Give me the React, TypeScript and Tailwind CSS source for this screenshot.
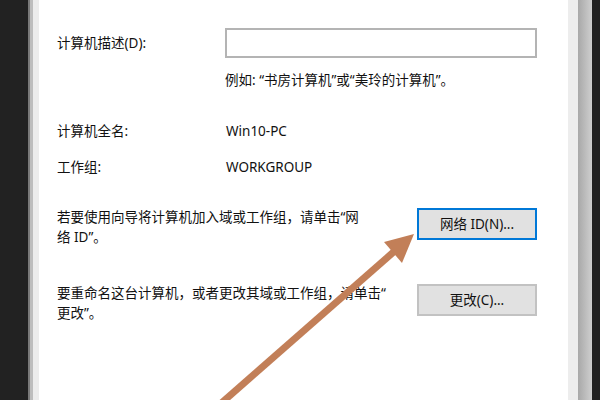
const FONT = { fontFamily: '"Noto Sans", "Noto Sans CJK SC", sans-serif' }

function Arrow() {
  // tip sits just left of the 网络 ID button
  return (
    <svg className="pointer-events-none absolute inset-0" width="600" height="400" viewBox="0 0 600 400">
      <line x1="218" y1="406" x2="397" y2="249" stroke="#c27f58" strokeWidth="7" />
      <polygon points="414,234 384,242 402,263" fill="#c27f58" />
    </svg>
  )
}

function WinButton({ label, focused }: { label: string; focused?: boolean }) {
  return (
    <button
      className={
        focused
          ? 'flex h-[32px] w-[120px] items-center justify-center border-2 border-[#0078d7] bg-[#e1e1e1] text-[13.5px] text-[#111]'
          : 'flex h-[32px] w-[120px] items-center justify-center border-2 border-[#c2c2c2] bg-[#e1e1e1] text-[13.5px] text-[#111]'
      }
    >
      {label}
    </button>
  )
}

export default function App() {
  return (
    <div className="relative flex h-[400px] w-[600px] overflow-hidden bg-[#222]" style={FONT}>
      {/* left window frame */}
      <div className="w-[28px] shrink-0 bg-[#222]" />
      <div className="w-[2px] shrink-0 bg-[#7a7a7a]" />
      <div className="w-[3px] shrink-0 bg-[#bdbdbd]" />
      <div className="w-[6px] shrink-0 bg-[#ececec]" />

      <div className="flex w-[529px] shrink-0 flex-col bg-white pl-[18px] pr-[31px] pt-[28px] text-[13.5px] leading-[20px] text-[#111]">
        <div className="flex h-[30px] items-center">
          <span className="w-[168px] shrink-0">计算机描述(D):</span>
          <div className="h-[30px] w-[312px] border-2 border-[#b4b4b4] bg-white" />
        </div>
        <p className="mt-[12px] pl-[168px]">例如: “书房计算机”或“美玲的计算机”。</p>

        <div className="mt-[31px] flex">
          <span className="w-[169px] shrink-0">计算机全名:</span>
          <span>Win10-PC</span>
        </div>
        <div className="mt-[16px] flex">
          <span className="w-[169px] shrink-0">工作组:</span>
          <span>WORKGROUP</span>
        </div>

        <div className="mt-[30px] flex items-start justify-between">
          <p>
            若要使用向导将计算机加入域或工作组，请单击“网
            <br />络 ID”。
          </p>
          <div className="mt-[1px]">
            <WinButton label="网络 ID(N)..." focused />
          </div>
        </div>

        <div className="mt-[36px] flex items-start justify-between">
          <p>
            要重命名这台计算机，或者更改其域或工作组，请单击“
            <br />更改”。
          </p>
          <div className="mt-[1px]">
            <WinButton label="更改(C)..." />
          </div>
        </div>
      </div>

      {/* right window frame */}
      <div className="w-[10px] shrink-0 bg-[#ededed]" />
      <div className="w-[14px] shrink-0 bg-gradient-to-r from-[#a8a8a8] to-[#cfcfcf]" />
      <div className="flex-1 bg-[#222]" />

      <Arrow />
    </div>
  )
}
